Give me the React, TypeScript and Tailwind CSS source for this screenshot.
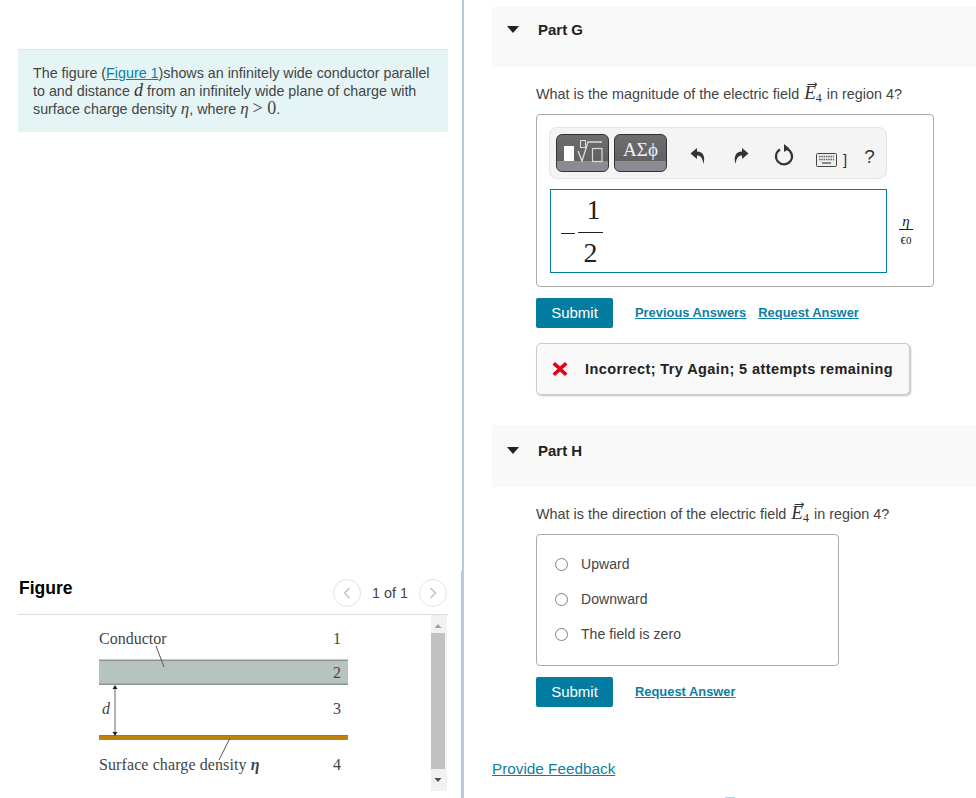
const font = "font-['Liberation_Sans',Arial,sans-serif]";
const serif = "font-['Liberation_Serif','Times_New_Roman',serif]";

function Triangle() {
  return (
    <svg width="12" height="7" viewBox="0 0 12 7" className="ml-[15px] mr-[19px] mt-[5px] shrink-0">
      <path d="M0 0H12L6 7Z" fill="#222" />
    </svg>
  );
}

function PartHead({ label, tall }: { label: string; tall?: boolean }) {
  return (
    <div className={tall ? "flex h-[62px] items-start bg-[#f9f9f9] pt-[17px]" : "flex h-[60px] items-start bg-[#f9f9f9] pt-[14px]"}>
      <Triangle />
      <span className="text-[15px] font-bold leading-[17px] text-[#222]">{label}</span>
    </div>
  );
}

function EField() {
  return (
    <span className={`${serif} relative mx-[1px] inline-block h-[10px] text-[19px] italic leading-[0] text-[#333]`}>
      <svg width="11" height="6" viewBox="0 0 11 6" className="absolute left-[3px] top-[-12px]">
        <path d="M0.5 3.5H10M7.5 1.5L10 3.5L7.5 5" stroke="#333" strokeWidth="1" fill="none" />
      </svg>
      E<sub className="relative bottom-[-3px] align-baseline text-[12px] not-italic leading-[0]">4</sub>
    </span>
  );
}

function SubmitButton() {
  return (
    <button className="h-[30px] w-[77px] rounded-[2px] bg-[#027ca0] text-[15px] text-white">Submit</button>
  );
}

function TinyLink({ children }: { children: string }) {
  return <a className="text-[12.900px] font-bold leading-[15px] text-[#0d7fa3] underline">{children}</a>;
}

function Figure() {
  return (
    <svg width="260" height="160" viewBox="0 0 260 160" className="ml-[81px] mt-[5px] shrink-0">
      <rect x="0" y="40" width="249" height="25" fill="#b7c4bd" />
      <rect x="0" y="39.5" width="249" height="1.5" fill="#8b9490" />
      <rect x="0" y="63.5" width="249" height="1.5" fill="#8b9490" />
      <rect x="0" y="115" width="249" height="5" fill="#bf8309" />
      <rect x="0" y="115" width="249" height="1" fill="#8b7a4a" />
      <path d="M57 26L65 47" stroke="#555" strokeWidth="1" />
      <path d="M16 67V114" stroke="#999" strokeWidth="1.500" />
      <path d="M13.500 69L16 65L18.500 69Z" fill="#222" />
      <path d="M13.500 112L16 116L18.500 112Z" fill="#222" />
      <path d="M131 118L120 140" stroke="#555" strokeWidth="1" />
      <g fontFamily="'Liberation Serif','Times New Roman',serif" fontSize="16" fill="#444">
        <text x="0" y="24">Conductor</text>
        <text x="234" y="24">1</text>
        <text x="234" y="58">2</text>
        <text x="234" y="94">3</text>
        <text x="3" y="94" fontStyle="italic">d</text>
        <text x="0" y="150" letterSpacing="0.1">Surface charge density <tspan fontStyle="italic" fontWeight="bold">η</tspan></text>
        <text x="234" y="150">4</text>
      </g>
    </svg>
  );
}

function Scrollbar() {
  return (
    <div className="flex h-[176px] w-[16px] shrink-0 flex-col bg-[#f1f1f1]">
      <svg width="14" height="18" viewBox="0 0 14 18" className="shrink-0">
        <path d="M3.500 13H10.500L7 9Z" fill="#a3a3a3" />
      </svg>
      <div className="h-[136px] w-[14px] shrink-0 bg-[#c1c1c1]" />
      <svg width="14" height="22" viewBox="0 0 14 22" className="shrink-0">
        <path d="M3.500 9H10.500L7 13Z" fill="#505050" />
      </svg>
    </div>
  );
}

function Pager({ dir }: { dir: "l" | "r" }) {
  return (
    <span className="flex h-[28px] w-[28px] items-center justify-center rounded-full border border-[#e3e3e3]">
      <svg width="8" height="12" viewBox="0 0 8 12">
        <path d={dir === "l" ? "M6.500 1L1.500 6L6.500 11" : "M1.500 1L6.500 6L1.500 11"} stroke="#c4c4c4" strokeWidth="1.500" fill="none" />
      </svg>
    </span>
  );
}

function ToolButton({ children }: { children: React.ReactNode }) {
  return (
    <div className="relative h-[38px] w-[53px] overflow-hidden rounded-[6px] border border-[#333] bg-gradient-to-b from-[#6e6e72] to-[#5c5c5e]">
      <div className="absolute inset-x-0 bottom-0 h-[10px] bg-[#8c8a92]" />
      <div className="relative flex h-full items-center justify-center">{children}</div>
    </div>
  );
}

function Toolbar() {
  return (
    <div className="flex h-[52px] w-[338px] items-center rounded-[8px] border border-[#e4e4e4] bg-[#f4f4f4] pl-[6px]">
      <ToolButton>
        <svg width="53" height="38" viewBox="0 0 53 38" className="shrink-0 -translate-x-px -translate-y-px">
          <rect x="9" y="13" width="10" height="15" fill="#fff" />
          <path d="M23 18L27 28L33 9H47" stroke="#dcdcdc" strokeWidth="1.300" fill="none" />
          <rect x="25.500" y="7.500" width="5" height="7" stroke="#dcdcdc" strokeWidth="1" fill="none" />
          <rect x="37.500" y="15.500" width="9.500" height="13" stroke="#dcdcdc" strokeWidth="1.200" fill="none" />
        </svg>
      </ToolButton>
      <div className="ml-[5px]">
        <ToolButton>
          <span className={`${serif} relative top-[-3px] text-[19px] text-[#f0f0f0]`}>ΑΣϕ</span>
        </ToolButton>
      </div>
      <svg width="16" height="18" viewBox="0 0 16 18" className="ml-[23px] mt-[6px]">
        <path d="M7 1L0.500 6.500L7 12V8.500C10.500 8.500 12.500 10.500 13.500 17C15.500 10 13.500 4.500 7 4.500Z" fill="#333" />
      </svg>
      <svg width="16" height="18" viewBox="0 0 16 18" className="ml-[27px] mt-[6px]">
        <path d="M9 1L15.500 6.500L9 12V8.500C5.500 8.500 3.500 10.500 2.500 17C0.500 10 2.500 4.500 9 4.500Z" fill="#333" />
      </svg>
      <svg width="20" height="22" viewBox="0 0 20 22" className="ml-[25px] mt-[4px]">
        <path d="M6 5.500A8 8 0 1 0 13 5" stroke="#333" strokeWidth="2.200" fill="none" />
        <path d="M10 0L15.500 4.500L10 8Z" fill="#333" />
      </svg>
      <svg width="21" height="14" viewBox="0 0 21 14" className="ml-[22px] mt-[13px]">
        <rect x="0.500" y="0.500" width="20" height="13" rx="1" fill="#eee" stroke="#444" />
        <path d="M3 3.500H18M3 6.500H18" stroke="#666" strokeWidth="1.500" strokeDasharray="1.500 0.800" />
        <path d="M6 10H15" stroke="#666" strokeWidth="1.500" />
      </svg>
      <span className="ml-[6px] mt-[12px] text-[15px] leading-none text-[#333]">]</span>
      <span className="ml-[17px] mt-[6px] text-[19px] leading-none text-[#333]">?</span>
    </div>
  );
}

function Radio({ label }: { label: string }) {
  return (
    <label className="flex h-[35px] items-center">
      <span className="h-[13px] w-[13px] rounded-full border border-[#808080] bg-white" />
      <span className="ml-[13px] text-[14px] tracking-[0.07px] text-[#444]">{label}</span>
    </label>
  );
}

export default function App() {
  return (
    <div className={`${font} flex h-[798px] w-[976px] overflow-hidden bg-white`}>
      <div className="flex h-full w-[461px] shrink-0 flex-col pt-[49px]">
        <div className="ml-[18px] h-[83px] w-[430px] border-t border-[#dde5e5] bg-[#e5f5f6] pl-[15px] pt-[15px] text-[14.300px] leading-[17.500px] text-[#444]">
          <p className="h-[17.500px]">
            The figure (<a className="text-[#0d7fa3] underline">Figure 1</a>)shows an infinitely wide conductor parallel
          </p>
          <p className="h-[17.500px]">
            to and distance <i className={`${serif} text-[18px] leading-[0] text-[#333]`}>d</i> from an infinitely wide plane of charge with
          </p>
          <p className="mt-[1px] h-[17.500px]">
            surface charge density <i className={`${serif} text-[17px] leading-[0]`}>η</i>, where{" "}
            <i className={`${serif} text-[17px] leading-[0]`}>η</i>{" "}
            <span className={`${serif} text-[18px] leading-[0]`}>&gt; 0</span>.
          </p>
        </div>
        <div className="ml-[18px] mt-[443px] flex h-[40px] w-[430px] items-start border-b border-[#dcdcdc]">
          <span className="ml-px mt-[3px] text-[17.500px] font-bold leading-[20px] text-black">Figure</span>
          <div className="ml-auto mr-px flex items-center pt-[4px]">
            <Pager dir="l" />
            <span className="mx-[11px] w-[36px] text-[14.400px] leading-[27px] text-[#444]">1 of 1</span>
            <Pager dir="r" />
          </div>
        </div>
        <div className="ml-[18px] flex w-[430px]">
          <Figure />
          <div className="mr-px ml-auto">
            <Scrollbar />
          </div>
        </div>
      </div>
      <div className="flex h-full w-[3px] shrink-0 flex-col items-end">
        <div className="h-[571px] w-[2px] bg-[#b3cbdf]" />
        <div className="w-[3px] flex-1 bg-[#bcc9d9]" />
      </div>
      <div className="flex h-full flex-1 flex-col pl-[28px] pt-[7px]">
        <PartHead label="Part G" />
        <div className="pl-[44px]">
          <p className="mt-[18px] h-[19px] text-[14.400px] leading-[19px] text-[#444]">
            What is the magnitude of the electric field <EField /> in region 4?
          </p>
          <div className="relative mt-[10px] h-[173px] w-[398px] rounded-[4px] border border-[#aaa] pl-[12px] pt-[12px]">
            <Toolbar />
            <div className={`${serif} ml-px mt-[10px] flex h-[84px] w-[337px] items-center border border-[#027ca0] pl-[10px] text-[#222]`}>
              <span className="mr-[3px] h-[1px] w-[14px] translate-y-[2px] bg-[#222]" />
              <span className="flex w-[25px] flex-col items-center text-[28px]">
                <span className="h-[43px] translate-x-[3px] leading-[41px]">1</span>
                <span className="h-[1px] w-full shrink-0 bg-[#222]" />
                <span className="h-[40px] leading-[40px]">2</span>
              </span>
            </div>
            <div className={`${serif} absolute left-[362px] top-[99px] flex w-[14px] flex-col items-center text-[#222]`}>
              <span className="text-[15px] italic leading-[15px]">η</span>
              <span className="h-[1px] w-full bg-[#222]" />
              <span className="text-[14px] leading-[20px]">ϵ<span className="text-[11px]">0</span></span>
            </div>
          </div>
          <div className="mt-[11px] flex items-start">
            <SubmitButton />
            <span className="ml-[22px] mt-[7px] flex"><TinyLink>Previous Answers</TinyLink></span>
            <span className="ml-[12px] mt-[7px] flex"><TinyLink>Request Answer</TinyLink></span>
          </div>
          <div className="mt-[15px] flex h-[52px] w-[374px] items-center rounded-[5px] border border-[#ccc] bg-[#f9f9f9] pl-[15px] shadow-[1px_1px_2px_rgba(0,0,0,0.25)]">
            <svg width="16" height="16" viewBox="0 0 16 16">
              <path d="M3 1L8 5.500L13 1L15.500 3.500L10.500 8L15.500 12.500L13 15L8 10.500L3 15L0.500 12.500L5.500 8L0.500 3.500Z" fill="#e2001a" />
            </svg>
            <span className="relative top-px ml-[17px] text-[14.500px] font-bold tracking-[0.400px] text-[#222]">Incorrect; Try Again; 5 attempts remaining</span>
          </div>
        </div>
        <div className="mt-[30px]">
          <PartHead label="Part H" tall />
        </div>
        <div className="pl-[44px]">
          <p className="mt-[18px] h-[19px] text-[14.400px] leading-[19px] text-[#444]">
            What is the direction of the electric field <EField /> in region 4?
          </p>
          <div className="mt-[10px] flex h-[132px] w-[303px] flex-col justify-center rounded-[4px] border border-[#aaa] pb-[2px] pl-[18px]">
            <Radio label="Upward" />
            <Radio label="Downward" />
            <Radio label="The field is zero" />
          </div>
          <div className="mt-[11px] flex items-start">
            <SubmitButton />
            <span className="ml-[22px] mt-[7px] flex"><TinyLink>Request Answer</TinyLink></span>
          </div>
        </div>
        <a className="mt-[53px] text-[15.300px] leading-[17px] text-[#0d7fa3] underline">Provide Feedback</a>
        <div className="ml-[233px] mt-[20px] h-[1px] w-[10px] shrink-0 rounded-full bg-[#a9d6e6]" />
      </div>
    </div>
  );
}
